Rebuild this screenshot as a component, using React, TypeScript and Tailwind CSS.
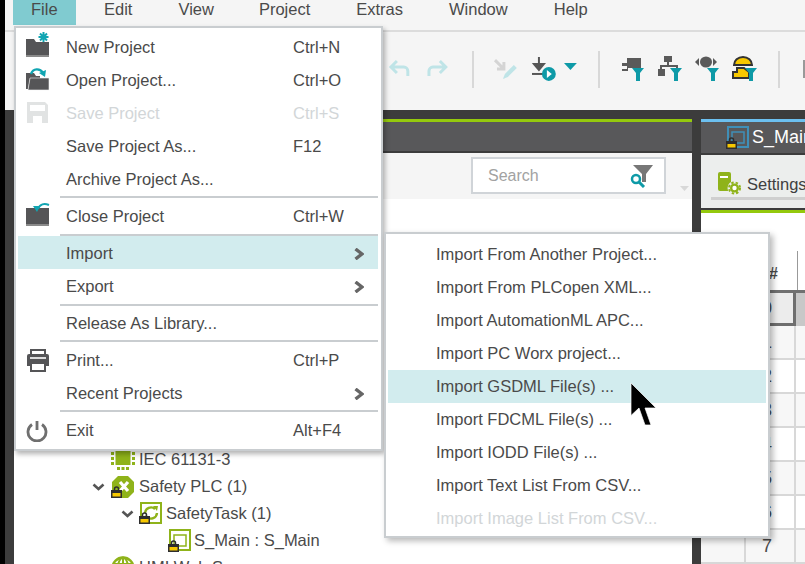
import { ReactNode } from 'react';

const font = 'font-["Liberation_Sans",Arial,sans-serif]';

function Lock({ x, y }: { x: number; y: number }) {
  return (
    <g transform={`translate(${x} ${y})`}>
      <rect x="0" y="3" width="11" height="8" fill="#2e2e2e" />
      <rect x="1.500" y="6" width="8" height="3.500" fill="#f7c800" />
      <path d="M3.500 3.500V2a2 2 0 0 1 4 0v1.500" fill="none" stroke="#2e2e2e" strokeWidth="1.500" />
    </g>
  );
}

function FolderNew() {
  return (
    <svg className="overflow-visible" width="26" height="26" viewBox="0 3 26 26">
      <path d="M1 7h8l2 3h13v15H1z" fill="#555557" />
      <rect x="1" y="23" width="23" height="2" fill="#8a8a8a" />
      <path d="M18.500 0v10M13.500 5h10M15 1.500l7 7M22 1.500l-7 7" stroke="#11a5b2" strokeWidth="2" />
    </svg>
  );
}

function FolderOpen() {
  return (
    <svg className="overflow-visible" width="26" height="26" viewBox="0 2 26 26">
      <path d="M1 7h8l2 3h4v2H5l-2 11H1z" fill="#555557" />
      <path d="M5 12h19v12H3z" fill="#555557" stroke="#f3f3f3" strokeWidth="0.600" />
      <path d="M6 8c2-6 9-6 12-1" fill="none" stroke="#11a5b2" strokeWidth="2.400" />
      <path d="M14 7l6 4 1-7z" fill="#11a5b2" />
    </svg>
  );
}

function SaveDisk() {
  return (
    <svg className="overflow-visible" width="26" height="26" viewBox="0 2 26 26">
      <path d="M2 3h18l3 3v18H2z" fill="#e1e3e3" />
      <rect x="5" y="6" width="15" height="6" fill="#fff" />
      <rect x="8" y="17" width="9" height="7" fill="#fff" />
    </svg>
  );
}

function FolderClose() {
  return (
    <svg className="overflow-visible" width="26" height="26" viewBox="0 3 26 26">
      <path d="M1 7h23v18H1z" fill="#555557" />
      <rect x="1" y="23" width="23" height="2" fill="#8a8a8a" />
      <path d="M24 4c-5-2-9-1-11 4" fill="none" stroke="#11a5b2" strokeWidth="2" />
      <path d="M8 5l7 0-3 6z" fill="#11a5b2" />
    </svg>
  );
}

function Printer() {
  return (
    <svg width="26" height="26" viewBox="0 0 26 26">
      <path d="M6 2h14v6H6z" fill="#fff" stroke="#555557" strokeWidth="2" />
      <path d="M2 8a2 2 0 0 1 2-2h18a2 2 0 0 1 2 2v10H2z" fill="#555557" />
      <rect x="5" y="9" width="16" height="2" fill="#ddd" />
      <rect x="6" y="15" width="14" height="8" fill="#fff" stroke="#555557" strokeWidth="2" />
    </svg>
  );
}

function Power() {
  return (
    <svg className="ml-[1px]" width="22" height="22" viewBox="0 0 22 22">
      <path d="M6 4.500a9 9 0 1 0 10 0" fill="none" stroke="#6f6f6f" strokeWidth="2.800" />
      <path d="M11 1v9" stroke="#6f6f6f" strokeWidth="2.800" />
    </svg>
  );
}

function Chevron() {
  return (
    <svg width="10" height="12" viewBox="0 0 10 12">
      <path d="M1.500 1L8 6l-6.500 5" fill="none" stroke="#666" strokeWidth="3.400" />
    </svg>
  );
}

function TreeChevron() {
  return (
    <svg className="shrink-0" width="13" height="8" viewBox="0 0 13 8">
      <path d="M1.500 1.500L6.500 6l5-4.500" fill="none" stroke="#555" strokeWidth="2.600" />
    </svg>
  );
}

function ChipIcon() {
  return (
    <svg width="24" height="24" viewBox="0 0 24 24">
      <rect x="4.500" y="2" width="15" height="15" fill="#8fb31a" />
      <path d="M0 4h3v3H0zM0 9h3v3H0zM0 14h3v3H0zM21 4h3v3h-3zM21 9h3v3h-3zM21 14h3v3h-3zM6 19h3v3H6zM10.500 19h3v3h-3zM15 19h3v3h-3z" fill="#8fb31a" />
    </svg>
  );
}

function SafetyPlcIcon() {
  return (
    <svg width="24" height="24" viewBox="0 0 24 24">
      <path d="M7 1h10l6 6v10l-6 6H7l-6-6V7z" fill="#8fb31a" />
      <path d="M9 7l8 9M17 7l-8 9" stroke="#fff" strokeWidth="3.200" />
      <Lock x={0} y={12} />
    </svg>
  );
}

function SafetyTaskIcon() {
  return (
    <svg width="24" height="24" viewBox="0 0 24 24">
      <rect x="2" y="1" width="20" height="20" fill="#fff" stroke="#8fb31a" strokeWidth="2" />
      <path d="M6 11a6 6 0 0 1 10-4M18 11a6 6 0 0 1-10 4" fill="none" stroke="#8fb31a" strokeWidth="2.400" />
      <path d="M14 4l5 0-1 5zM10 18l-5 0 1-5z" fill="#8fb31a" />
      <Lock x={0} y={11} />
    </svg>
  );
}

function ProgramIcon({ color = '#8fb31a' }: { color?: string }) {
  return (
    <svg className="shrink-0" width="24" height="24" viewBox="0 0 24 24">
      <rect x="2" y="1" width="20" height="20" fill="none" stroke={color} strokeWidth="2" />
      <rect x="6" y="6" width="12" height="11" fill="none" stroke={color} strokeWidth="1.500" />
      <Lock x={0} y={12} />
    </svg>
  );
}

function GlobeIcon() {
  return (
    <svg width="24" height="24" viewBox="0 0 24 24">
      <circle cx="12" cy="12" r="10.500" fill="none" stroke="#8fb31a" strokeWidth="2.400" />
      <ellipse cx="12" cy="12" rx="5" ry="10.500" fill="none" stroke="#8fb31a" strokeWidth="2" />
      <path d="M2 8h20M2 15h20M12 1v22" stroke="#8fb31a" strokeWidth="2" />
    </svg>
  );
}

function FilterMark({ x, y }: { x: number; y: number }) {
  return <path transform={`translate(${x} ${y})`} d="M0 0h12l-4 5v8H4V5z" fill="#0e9aa7" />;
}

function FilterIcon({ children }: { children: ReactNode }) {
  return (
    <svg width="26" height="26" viewBox="0 0 26 26">
      {children}
    </svg>
  );
}

function Sep() {
  return <div className="w-[2px] h-[37px] bg-[#d8d8d8]" />;
}

function Gear() {
  return (
    <svg className="shrink-0" width="26" height="26" viewBox="0 0 26 26">
      <path d="M1 3a2 2 0 0 1 2-2h9a2 2 0 0 1 2 2v17H3a2 2 0 0 1-2-2z" fill="#8fb31a" />
      <rect x="3" y="5" width="8" height="2" fill="#fff" />
      <circle cx="17.500" cy="17" r="7" fill="#eceeed" />
      <circle cx="17.500" cy="17" r="4.500" fill="#8fb31a" />
      <circle cx="17.500" cy="17" r="5.500" fill="none" stroke="#8fb31a" strokeWidth="2" strokeDasharray="2.400 2" />
      <circle cx="17.500" cy="17" r="2.200" fill="#fff" />
    </svg>
  );
}

function MenuRow({
  icon,
  label,
  shortcut,
  arrow,
  disabled,
  active,
  low,
}: {
  icon?: ReactNode;
  label: string;
  shortcut?: string;
  arrow?: boolean;
  disabled?: boolean;
  active?: boolean;
  low?: boolean;
}) {
  return (
    <div
      className={`flex items-center h-[33px] ${low ? 'pt-[2px]' : ''} ${active ? 'bg-[#d2ecee]' : ''} ${
        disabled ? 'text-[#d2d6d8]' : 'text-[#4a4a4a]'
      }`}
    >
      <div className="w-[48px] pl-[7px] flex items-center">{icon}</div>
      <div className="flex-1">{label}</div>
      {shortcut && <div className="w-[85px]">{shortcut}</div>}
      {arrow && (
        <div className="w-[24px]">
          <Chevron />
        </div>
      )}
    </div>
  );
}

function MenuSep({ className }: { className: string }) {
  return <div className={`h-[2px] ml-[42px] bg-[#c9cdd0] ${className}`} />;
}

const importItems = [
  'Import From Another Project...',
  'Import From PLCopen XML...',
  'Import AutomationML APC...',
  'Import PC Worx project...',
  'Import GSDML File(s) ...',
  'Import FDCML File(s) ...',
  'Import IODD File(s) ...',
  'Import Text List From CSV...',
  'Import Image List From CSV...',
];

const rows = [0, 1, 2, 3, 4, 5, 6, 7];

export default function App() {
  return (
    <div className={`relative w-[805px] h-[564px] overflow-hidden bg-black pl-[5px] text-[16.5px] text-[#4a4a4a] ${font}`}>
      <div className="w-[800px] h-[564px] flex flex-col bg-[#3c3c3c]">
        {/* menu bar */}
        <div className="h-[32px] shrink-0 bg-[#f5f5f5] border-b-2 border-[#dcdcdc] flex items-start pl-[8px]">
          <div className="w-[63px] h-[25px] bg-[#80cbd0] pl-[18px] leading-[19px]">File</div>
          <div className="ml-[28px] leading-[19px]">Edit</div>
          <div className="ml-[46px] leading-[19px]">View</div>
          <div className="ml-[45px] leading-[19px]">Project</div>
          <div className="ml-[46px] leading-[19px]">Extras</div>
          <div className="ml-[46px] leading-[19px]">Window</div>
          <div className="ml-[46px] leading-[19px]">Help</div>
        </div>

        {/* toolbar */}
        <div className="h-[78px] shrink-0 bg-[#f5f5f5] flex items-center pl-[383px] pb-[4px]">
          <svg width="24" height="20" viewBox="0 0 24 20">
            <path d="M9 2L3 8l6 6M3 8h13a4 4 0 0 1 4 4v5" fill="none" stroke="#bfe4e7" strokeWidth="3" />
          </svg>
          <svg className="ml-[13px]" width="24" height="20" viewBox="0 0 24 20">
            <path d="M15 2l6 6-6 6M21 8H8a4 4 0 0 0-4 4v5" fill="none" stroke="#bfe4e7" strokeWidth="3" />
          </svg>
          <div className="ml-[23px]">
            <Sep />
          </div>
          <svg className="ml-[19px]" width="26" height="24" viewBox="0 0 26 24">
            <path d="M2 3l9 9M11 5v7H4" fill="none" stroke="#d4d4d4" strokeWidth="3" />
            <path d="M10 22l2-5 9-9 3 3-9 9z" fill="#bfe4e7" />
          </svg>
          <svg className="ml-[13px]" width="28" height="28" viewBox="0 0 28 28">
            <path d="M8 2v11M3 9l5 6 5-6z" fill="#555" stroke="#555" strokeWidth="2" />
            <path d="M1 19h13" stroke="#555" strokeWidth="2" />
            <circle cx="18" cy="19" r="7" fill="#0e9aa7" />
            <path d="M16 15l5 4-5 4z" fill="#fff" />
          </svg>
          <svg className="ml-[5px] mb-[5px]" width="14" height="8" viewBox="0 0 14 8">
            <path d="M0 0h13L6.500 7z" fill="#0e9aa7" />
          </svg>
          <div className="ml-[20px]">
            <Sep />
          </div>
          <div className="ml-[21px] flex gap-[11px]">
            <FilterIcon>
              <path d="M1 7h5V2h14v10H7v3H1v-2h5v-3H1z" fill="#5a5a5a" />
              <FilterMark x={11} y={12} />
            </FilterIcon>
            <FilterIcon>
              <path d="M6 0h8v6h-3v3h9v6h-2v-4H4v2h3v7H-1v-7h3V9h7V6H6z" fill="#5a5a5a" />
              <FilterMark x={12} y={12} />
            </FilterIcon>
            <FilterIcon>
              <ellipse cx="11" cy="6" rx="6" ry="5.500" fill="#5a5a5a" />
              <path d="M0 6l4-4v8zM22 6l-4-4v8z" fill="#5a5a5a" />
              <FilterMark x={12} y={12} />
            </FilterIcon>
            <FilterIcon>
              <path d="M2 9a9 8 0 0 1 18 0z" fill="#f7c800" stroke="#333" strokeWidth="2" />
              <path d="M5 12h7l5 4v6H1v-6h4z" fill="#f7c800" stroke="#333" strokeWidth="2" />
              <FilterMark x={13} y={12} />
            </FilterIcon>
          </div>
          <div className="ml-[20px]">
            <Sep />
          </div>
          <div className="ml-[23px] w-[2px] h-[18px] bg-[#999]" />
        </div>

        {/* panels */}
        <div className="flex-1 flex pt-[9px] pl-[9px] min-h-0">
          <div className="w-[678px] flex flex-col min-h-0">
            <div className="h-[3px] shrink-0 bg-[#94c90d]" />
            <div className="h-[29px] shrink-0 bg-[#58585a]" />
            <div className="h-[2px] shrink-0 bg-[#3c3c3c]" />
            <div className="h-[46px] shrink-0 bg-[#f5f5f5] flex items-start pl-[457px] pt-[4px]">
              <div className="w-[195px] h-[37px] bg-white border-2 border-[#d0d4d8] flex items-center pl-[15px] pr-[10px] text-[#a2a2a2] text-[16px]">
                <span className="flex-1">Search</span>
                <svg width="24" height="24" viewBox="0 0 24 24">
                  <path d="M3 1h20l-7 9v8h-4v-8z" fill="#777" />
                  <circle cx="6" cy="15" r="4" fill="#fff" stroke="#0e9aa7" strokeWidth="2.500" />
                  <path d="M9 18l5 5" stroke="#0e9aa7" strokeWidth="3" />
                </svg>
              </div>
              <svg className="ml-[14px] mt-[29px]" width="10" height="5" viewBox="0 0 10 5">
                <path d="M0 0h9L4.500 5z" fill="#d8d8d8" />
              </svg>
            </div>

            {/* tree */}
            <div className="flex-1 min-h-0 overflow-hidden bg-white pt-[247px]">
              <div className="h-[27px] flex items-center pl-[97px] gap-[4px]">
                <ChipIcon />
                <span>IEC 61131-3</span>
              </div>
              <div className="h-[27px] flex items-center pl-[78px]">
                <TreeChevron />
                <span className="ml-[6px] mr-[4px]">
                  <SafetyPlcIcon />
                </span>
                <span>Safety PLC (1)</span>
              </div>
              <div className="h-[27px] flex items-center pl-[107px]">
                <TreeChevron />
                <span className="ml-[5px] mr-[3px]">
                  <SafetyTaskIcon />
                </span>
                <span>SafetyTask (1)</span>
              </div>
              <div className="h-[27px] flex items-center pl-[154px] gap-[2px]">
                <ProgramIcon />
                <span>S_Main : S_Main</span>
              </div>
              <div className="h-[27px] flex items-center pl-[80px]">
                <TreeChevron />
                <span className="ml-[4px] mr-[4px]">
                  <GlobeIcon />
                </span>
                <span>HMI Web S</span>
              </div>
            </div>
          </div>

          <div className="ml-[9px] flex-1 flex flex-col overflow-hidden min-h-0">
            <div className="h-[3px] shrink-0 bg-[#6cc0f0]" />
            <div className="h-[31px] shrink-0 bg-[#58585a] flex items-center pl-[25px] gap-[2px] text-white text-[18px] whitespace-nowrap">
              <ProgramIcon color="#3f8fb8" />
              <span>S_Main</span>
            </div>
            <div className="h-[2px] shrink-0 bg-[#3c3c3c]" />
            <div className="h-[53px] shrink-0 bg-[#eceeed] pl-[10px] pt-[15px] whitespace-nowrap">
              <div className="h-[30px] flex items-center pl-[6px] gap-[4px] border-b-[3px] border-[#cfcfcf] text-[#404040]">
                <Gear />
                <span className="mt-[2px]">Settings</span>
              </div>
            </div>
            <div className="h-[2px] shrink-0 bg-[#3c3c3c]" />
            <div className="h-[3px] shrink-0 bg-[#94c90d]" />

            {/* table */}
            <div className="flex-1 min-h-0 bg-white">
              <div className="h-[80px] flex pl-[47px] border-b-[3px] border-[#707070]">
                <div className="w-[48px] pt-[51px] pl-[21px] font-bold text-[16px] leading-[20px]">#</div>
                <div className="w-[1px] mt-[38px] ml-[1px] bg-[#999]" />
              </div>
              {rows.map((n) => (
                <div
                  key={n}
                  className={`flex pl-[2px] ${n === 0 ? 'h-[33px] bg-[#c8c8c8]' : 'h-[34px] border-b-2 border-[#d8d8d8]'} ${
                    n % 2 === 1 ? 'bg-[#f7f7f7]' : ''
                  }`}
                >
                  <div className="w-[43px] border-r-2 border-[#d8d8d8]" />
                  <div
                    className={`w-[50px] pl-[16px] text-[18px] flex items-center ${
                      n === 0 ? 'bg-[#ececec] border-r-[3px] border-b-[3px] border-[#6e6e6e]' : 'border-r-2 border-[#d8d8d8]'
                    }`}
                  >
                    {n}
                  </div>
                </div>
              ))}
            </div>
          </div>
        </div>
      </div>

      {/* File menu */}
      <div className="absolute left-[14px] top-[26px] w-[369px] h-[425px] bg-white border-2 border-[#c9cdd0] shadow-[2px_3px_5px_rgba(0,0,0,0.3)] pl-[2px] pr-[3px] pt-[3px]">
        <MenuRow icon={<FolderNew />} label="New Project" shortcut="Ctrl+N" />
        <MenuRow icon={<FolderOpen />} label="Open Project..." shortcut="Ctrl+O" />
        <MenuRow icon={<SaveDisk />} label="Save Project" shortcut="Ctrl+S" disabled />
        <MenuRow label="Save Project As..." shortcut="F12" />
        <MenuRow label="Archive Project As..." />
        <MenuSep className="mb-[1px]" />
        <MenuRow icon={<FolderClose />} label="Close Project" shortcut="Ctrl+W" low />
        <MenuSep className="mt-[2px]" />
        <MenuRow label="Import" arrow active low />
        <MenuRow label="Export" arrow low />
        <MenuSep className="mt-[2px]" />
        <MenuRow label="Release As Library..." low />
        <MenuSep className="mt-[1px] mb-[1px]" />
        <MenuRow icon={<Printer />} label="Print..." shortcut="Ctrl+P" low />
        <MenuRow label="Recent Projects" arrow low />
        <MenuSep className="mt-[1px] mb-[1px]" />
        <MenuRow icon={<Power />} label="Exit" shortcut="Alt+F4" low />
      </div>

      {/* Import submenu */}
      <div className="absolute left-[384px] top-[232px] w-[386px] h-[306px] bg-white border-2 border-[#c9cdd0] shadow-[3px_3px_6px_rgba(0,0,0,0.28)] px-[2px] pt-[4px]">
        {importItems.map((item, i) => (
          <div
            key={item}
            className={`h-[33px] flex items-center pl-[48px] ${i === 4 ? 'bg-[#d2ecee]' : ''} ${
              i === 8 ? 'text-[#d2d6d8]' : ''
            }`}
          >
            {item}
          </div>
        ))}
      </div>

      {/* mouse cursor */}
      <svg className="absolute left-[630px] top-[382px]" width="28" height="44" viewBox="0 0 28 44">
        <path d="M1 1v32.500L9 26l6 17h6l-6-17h11z" fill="#000" stroke="#fff" strokeWidth="0.700" />
      </svg>
    </div>
  );
}
